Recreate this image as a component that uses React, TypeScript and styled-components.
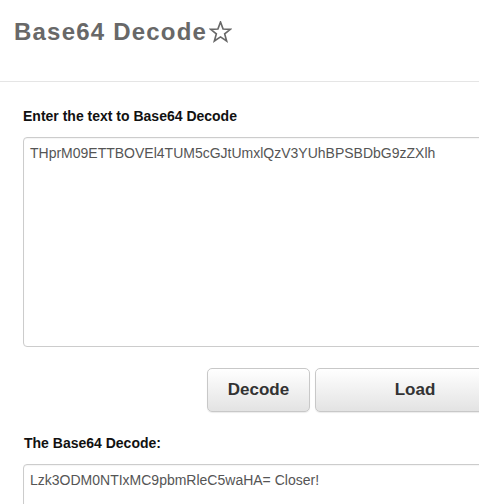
import React from "react";
import styled, { createGlobalStyle } from "styled-components";

const Global = createGlobalStyle`
  html, body { margin: 0; padding: 0; background: #fff; overflow: hidden; }
  body { font-family: "Liberation Sans", Arial, sans-serif; }
`;

const Page = styled.div`
  width: 479px;
  height: 504px;
  overflow: hidden;
`;

const Header = styled.header`
  height: 82px;
  border-bottom: 1px solid #e5e5e5;
  padding: 18px 0 0 14px;
  box-sizing: border-box;
`;

const Title = styled.h1`
  margin: 0;
  font-size: 24px;
  line-height: 28px;
  font-weight: bold;
  letter-spacing: 1.2px;
  color: #686868;
  white-space: nowrap;
  display: flex;
  align-items: center;
`;

const Star = styled.svg`
  width: 23px;
  height: 22px;
  margin-left: 2px;
  margin-top: -1px;
`;

const Content = styled.main`
  width: 640px;
  padding: 25px 0 0 23px;
  display: flex;
  flex-direction: column;
`;

const Label = styled.label<{ $left?: number }>`
  font-size: 14px;
  line-height: 18px;
  font-weight: bold;
  color: #111;
  margin-left: ${(p) => p.$left ?? 0}px;
`;

const Area = styled.div<{ $height: number }>`
  margin-top: 12px;
  width: 600px;
  height: ${(p) => p.$height}px;
  border: 1px solid #cccccc;
  border-radius: 4px;
  box-sizing: border-box;
  padding: 5px 6px;
  font-size: 14px;
  line-height: 20px;
  color: #555;
  white-space: nowrap;
  box-shadow: inset 0 1px 1px rgba(0, 0, 0, 0.04);
`;

const ButtonRow = styled.div`
  display: flex;
  gap: 5px;
  padding-left: 184px;
  margin-top: 21px;
  margin-bottom: 22px;
`;

const Button = styled.button<{ $width: number }>`
  width: ${(p) => p.$width}px;
  height: 44px;
  border: 1px solid #c8c8c8;
  border-radius: 5px;
  background: linear-gradient(#ffffff, #e3e3e3);
  font-family: "Liberation Sans", Arial, sans-serif;
  font-size: 17px;
  font-weight: bold;
  color: #333;
  padding: 0;
  box-shadow: 0 1px 1px rgba(0, 0, 0, 0.08);
`;

export default function App() {
  return (
    <Page>
      <Global />
      <Header>
        <Title>
          Base64 Decode
          <Star viewBox="0 0 22 21" aria-label="☆">
            <polygon
              points="11,1 13.47,7.6 20.51,7.91 14.99,12.3 16.88,19.09 11,15.2 5.12,19.09 7.01,12.3 1.49,7.91 8.53,7.6"
              fill="none"
              stroke="#686868"
              strokeWidth="1.6"
              strokeLinejoin="miter"
            />
          </Star>
        </Title>
      </Header>
      <Content>
        <Label>Enter the text to Base64 Decode</Label>
        <Area $height={210}>THprM09ETTBOVEl4TUM5cGJtUmxlQzV3YUhBPSBDbG9zZXlh</Area>
        <ButtonRow>
          <Button $width={103}>Decode</Button>
          <Button $width={200}>Load</Button>
        </ButtonRow>
        <Label $left={1}>The Base64 Decode:</Label>
        <Area $height={80}>Lzk3ODM0NTIxMC9pbmRleC5waHA= Closer!</Area>
      </Content>
    </Page>
  );
}
